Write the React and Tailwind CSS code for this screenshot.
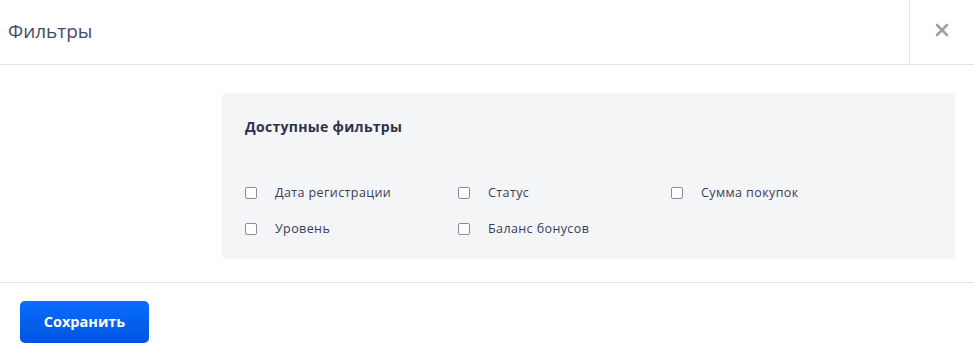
import React from "react";

const Item = ({ label }) => (
  <label className="flex items-center h-[18px]">
    <span className="w-[12px] h-[12px] rounded-[2px] border border-[#8a8d99] bg-white shrink-0" />
    <span className="ml-[18px] text-[12.5px] tracking-[0.4px] text-[#3b3d58] leading-none">{label}</span>
  </label>
);

export default function App() {
  return (
    <div className="w-[974px] h-[359px] bg-white overflow-hidden" style={{ fontFamily: '"Open Sans", "Noto Sans", sans-serif' }}>
      <div className="h-[65px] flex border-b border-[#e3e5ea]">
        <div className="flex-1 flex items-center pl-[8px] pb-[2px] text-[19px] text-[#474a63]">Фильтры</div>
        <div className="w-[65px] border-l border-[#e3e5ea] flex items-center justify-center pb-[4px]">
          <svg width="14" height="14" viewBox="0 0 14 14">
            <path d="M2 2L12 12M12 2L2 12" stroke="#9aa2ad" strokeWidth="2.6" strokeLinecap="round" />
          </svg>
        </div>
      </div>
      <div className="pl-[222px] pt-[28px] pb-[23px] border-b border-[#e3e5ea]">
        <div className="w-[733px] h-[166px] bg-[#f4f5f7] rounded-[4px] pl-[23px] pt-[27px]">
          <div className="text-[14px] tracking-[0.3px] font-bold text-[#2f314b] leading-none">Доступные фильтры</div>
          <div className="grid grid-cols-[213px_213px_213px] gap-y-[18px] mt-[50px]">
            <Item label="Дата регистрации" />
            <Item label="Статус" />
            <Item label="Сумма покупок" />
            <Item label="Уровень" />
            <Item label="Баланс бонусов" />
          </div>
        </div>
      </div>
      <div className="pl-[20px] pt-[18px]">
        <button className="w-[129px] h-[42px] rounded-[5px] bg-gradient-to-b from-[#0a6dff] to-[#0055df] text-white text-[14.5px] font-bold">
          Сохранить
        </button>
      </div>
    </div>
  );
}
